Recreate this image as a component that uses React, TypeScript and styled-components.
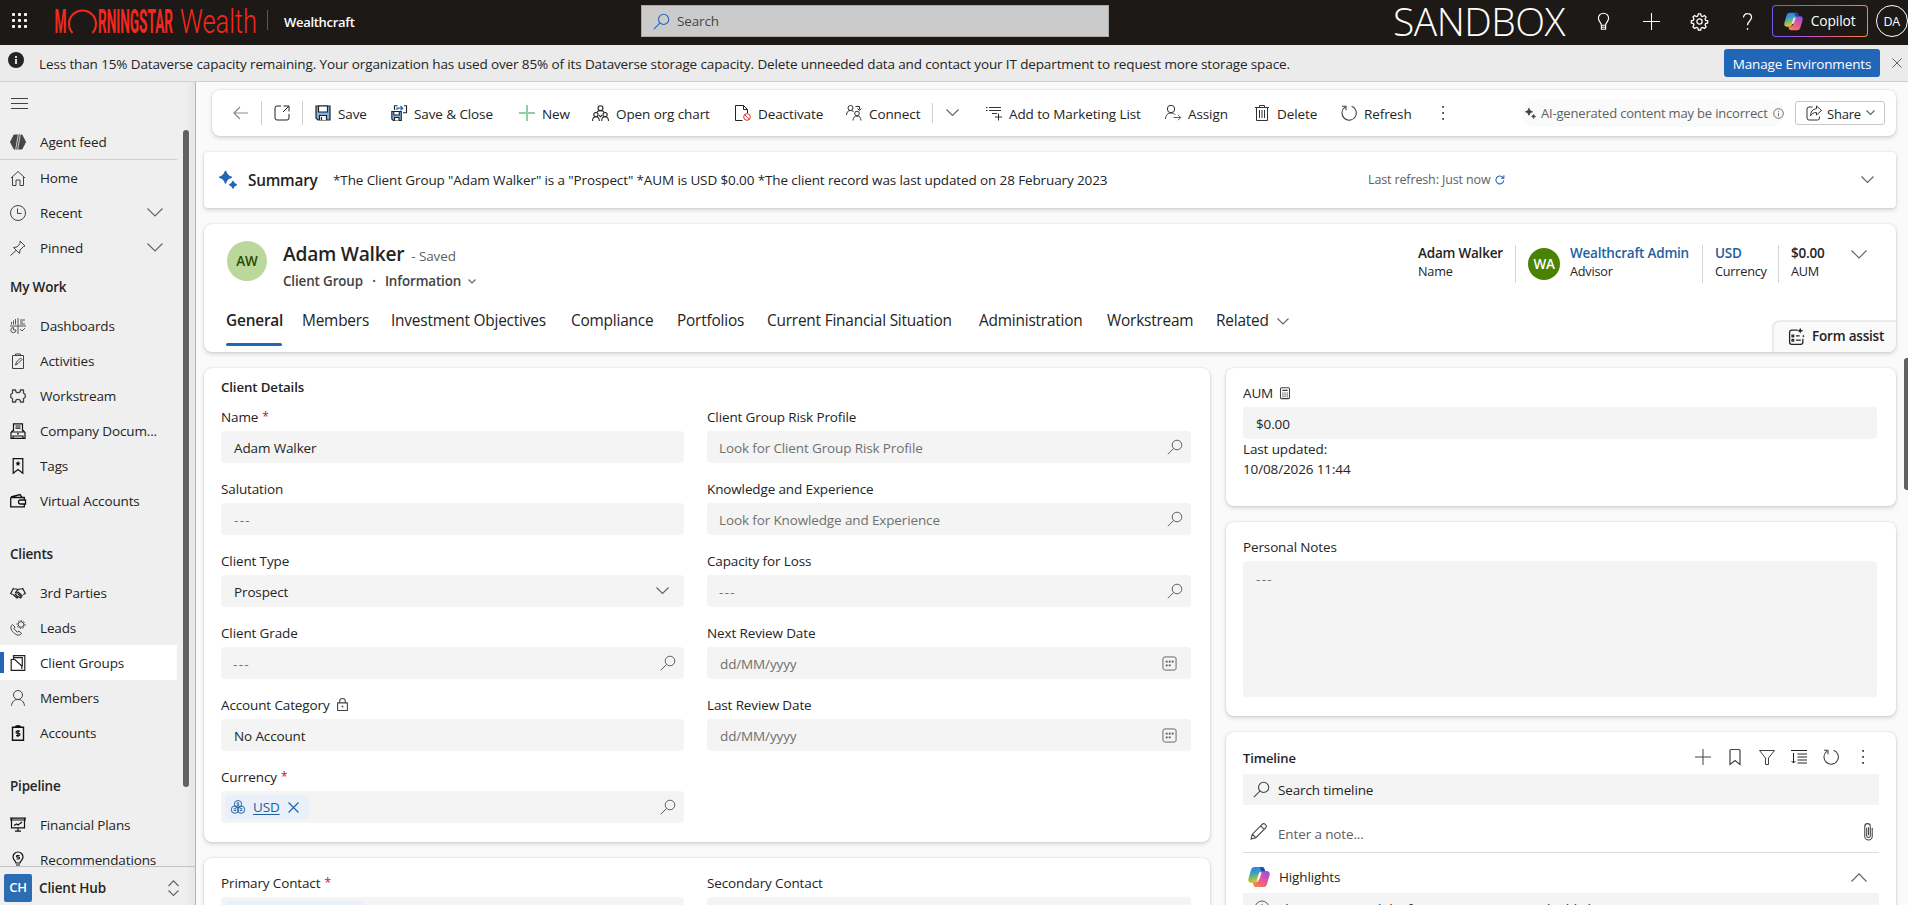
import React from "react";
import styled, { createGlobalStyle, css } from "styled-components";

const GlobalStyle = createGlobalStyle`
  * { box-sizing: border-box; }
  html, body { margin: 0; padding: 0; overflow: hidden; }
  body {
    font-family: "Open Sans", "Noto Sans", sans-serif;
    font-size: 13.5px;
    line-height: 20px;
    letter-spacing: -0.13px;
    color: #242424;
    background: #fafafa;
  }
  svg { display: block; flex: none; overflow: visible; }
`;

/* ---------- icons ---------- */

type IconProps = {
  size?: number;
  color?: string;
  sw?: number;
  box?: string;
  children?: React.ReactNode;
};
const Icon = ({ size = 16, color = "#424242", sw = 1, box = "0 0 16 16", children }: IconProps) => (
  <svg width={size} height={size} viewBox={box} fill="none" stroke={color} strokeWidth={sw}>
    {children}
  </svg>
);
type P = { size?: number; color?: string };

const Chevron = ({ w = 14, color = "#616161", up = false, sw = 1.1 }: { w?: number; color?: string; up?: boolean; sw?: number }) => (
  <svg width={w} height={w / 2 + 1} viewBox={`0 0 ${w} ${w / 2 + 1}`} fill="none" stroke={color} strokeWidth={sw}>
    <path d={up ? `M.5 ${w / 2 + 0.5}L${w / 2} .8l${w / 2 - 0.5} ${w / 2 - 0.3}` : `M.5 .5l${w / 2 - 0.5} ${w / 2 - 0.5}l${w / 2 - 0.5} -${w / 2 - 0.5}`} />
  </svg>
);
const SearchIcon = ({ size = 16, color = "#616161" }: P) => (
  <Icon size={size} color={color}><circle cx="10" cy="6" r="4.8" /><path d="M6.5 9.5L.8 15.2" /></Icon>
);
const PlusIcon = ({ size = 16, color = "#424242", sw = 1 }: P & { sw?: number }) => (
  <Icon size={size} color={color} sw={sw}><path d="M8 0v16M0 8h16" /></Icon>
);
const RefreshIcon = ({ size = 16, color = "#424242" }: P) => (
  <Icon size={size} color={color} sw={1.1}><path d="M10.6 1.2A7.2 7.2 0 1 1 4 2.1M1 1.3h4v4" /></Icon>
);
const ReloadIcon = () => (
  <Icon size={10} color="#2266b8" sw={1.700}><path d="M14 8.500A6.300 6.300 0 1 1 12.500 3.800L14 5M14.200 .5V5.200H9.500" /></Icon>
);
const DotsIcon = () => (
  <Icon><g fill="#424242" stroke="none"><rect x="7.2" y="1" width="1.8" height="1.8" /><rect x="7.2" y="7" width="1.8" height="1.8" /><rect x="7.2" y="13" width="1.8" height="1.8" /></g></Icon>
);
const CloseIcon = ({ size = 11, color = "#616161" }: P) => (
  <Icon size={size} color={color} box="0 0 11 11" sw={1.1}><path d="M.5 .5l10 10M10.5 .5l-10 10" /></Icon>
);
const CopilotIcon = ({ size = 20 }: P) => (
  <svg width={size} height={size} viewBox="0 0 20 20">
    <defs>
      <linearGradient id="cpA" x1="0" y1="0" x2="0.2" y2="1">
        <stop offset="0" stopColor="#2f7be0" /><stop offset=".45" stopColor="#3fa0c8" /><stop offset=".75" stopColor="#8fbf4d" /><stop offset="1" stopColor="#e6c33f" />
      </linearGradient>
      <linearGradient id="cpB" x1="1" y1="0" x2="0.2" y2="1">
        <stop offset="0" stopColor="#8a4fe0" /><stop offset=".5" stopColor="#e2559f" /><stop offset="1" stopColor="#fb8148" />
      </linearGradient>
    </defs>
    <path d="M6 .8h6.600c1.200 0 2 .7 2.300 1.800l.7 2.400h-2.300c-1.500 0-2.600.8-3 2.200L8.400 13.500c-.4 1.300-1.200 1.900-2.500 1.900H3.200C1 15.400-.2 13.700.4 11.500L2.700 3.600C3.200 1.800 4.300.8 6 .8z" fill="url(#cpA)" />
    <path d="M14 19.200H7.400c-1.200 0-2-.7-2.300-1.800l-.7-2.400h2.300c1.500 0 2.600-.8 3-2.200l1.900-6.300c.4-1.300 1.200-1.900 2.500-1.900h2.700c2.200 0 3.400 1.700 2.800 3.900l-2.300 7.900c-.5 1.800-1.600 2.800-3.300 2.800z" fill="url(#cpB)" />
    <path d="M10.800 .8h1.800c1.200 0 2 .7 2.300 1.800l.7 2.400h-3.400z" fill="#1c46b8" />
    <path d="M8.300 11.500l1.800-5.700 2.300-.2-1.900 6.300-2.600 1.300z" fill="#fff" opacity=".85" />
  </svg>
);
const Sparkle = ({ size = 18, color = "#2266b8" }: P) => (
  <svg width={size} height={size} viewBox="0 0 18 18" fill={color}>
    <path d="M6.500 .500c.8 3.300 2.400 4.900 5.700 5.700-3.300.8-4.900 2.400-5.700 5.700C5.700 8.600 4.100 7 .8 6.200 4.100 5.400 5.700 3.800 6.500.500z" stroke={color} strokeWidth="1.600" strokeLinejoin="round" />
    <path d="M14 10.500c.5 2 1.300 2.800 3.300 3.300-2 .5-2.800 1.300-3.300 3.300-.5-2-1.300-2.800-3.300-3.300 2-.5 2.800-1.300 3.300-3.300z" stroke={color} strokeWidth="1.400" strokeLinejoin="round" />
  </svg>
);

const sideIcons: Record<string, React.ReactNode> = {
  feed: (
    <Icon><path d="M4 1h8l3.500 7L12 15H4L.5 8z" fill="#484644" stroke="#484644" strokeLinejoin="round" /><path d="M8.300 .5L5.700 15.500M10.300 .5L7.700 15.500" stroke="#efefef" strokeWidth=".8" /></Icon>
  ),
  home: <Icon><path d="M1 8L8 1.500 15 8M2.500 7v8.500h3.500V10h4v5.500h3.500V7" /></Icon>,
  recent: <Icon><circle cx="8" cy="8" r="7.500" /><path d="M7.500 3.500V8.500h4" /></Icon>,
  pin: <Icon><path d="M10 1l5 5-1.500.5-3.500 3.500-.5 3.500L3.500 7.500 7 7l3-3.500zM6 10.500L.5 15.500" /></Icon>,
  dash: (
    <Icon color="#555"><path d="M0 8h16M8 0v16M10 2h5M10 4h3M10 6h5M1.500 6.500V4M3.500 6.500V2.500M5.500 6.500V1M10 11l2 2 3-3M3.500 9.500V12h2.500" /><path d="M6 12a2.600 2.600 0 1 1-2.500-2.500" /></Icon>
  ),
  act: <Icon><path d="M2.500 2.500h11v13h-11zM5.500 2.500V1h5v1.500M5.500 12l1-3 4-4 1.500 1.500-4 4z" /></Icon>,
  puzzle: (
    <Icon sw={1.300}><path d="M2.500 2h3.200c-.3 1.800.5 2.600 2.300 2.600s2.600-.8 2.300-2.600h3.200v3.300l1.700 1v3.200l-1.700 1V14h-3.200c.3-1.800-.5-2.600-2.300-2.600s-2.600.8-2.300 2.600H2.500v-3.500l-1.700-1V6.300l1.700-1z" strokeLinejoin="round" /></Icon>
  ),
  docs: (
    <Icon color="#111" sw={1.2}><path d="M3.500 8V.8h9V8M5.500 3h5M5.500 5.200h5M3.500 7L1 9.500v5.800h14V9.500L12.500 7M1 9h14M3 15v-2h10v2" /><rect x="7" y="10.200" width="2" height="1.200" fill="#111" stroke="none" /></Icon>
  ),
  tag: (
    <Icon color="#111" sw={1.2}><path d="M3.200.7h9.600v14.500L8 11.500l-4.800 3.700z" /><path d="M8 3l.8 1.600 1.700.2-1.300 1.200.4 1.800L8 7l-1.600.8.400-1.800-1.300-1.200 1.700-.2z" fill="#111" stroke="none" /></Icon>
  ),
  wallet: (
    <Icon color="#111" sw={1.3}><path d="M.7 4.500v9.300h13.600V11M.7 4.500h13.600V7M1 4l9-2.500 2 2.800M10.500 7h5v4h-5a2 2 0 0 1 0-4z" /></Icon>
  ),
  shake: (
    <Icon color="#222" sw={1.2}><path d="M3.500 3L.7 8.500l2 1M12.500 3l2.800 5.500-2 1M3.500 4h3L8 4.700 9.500 4h3M8 4.700L5.500 7.500c1 1 2 .6 2.800-.3L12.500 11M3 9.500L7 13l1-.6M5 9l3 3M8 9l3.500 3-1 1L8 11.500" /></Icon>
  ),
  leads: (
    <Icon><path d="M2.500 4.500C0 6.500.5 9.500 3.500 12.500s6 3.500 8 1l-2.500-2.300-1.700 1L4 8.700l1-1.700z" /><circle cx="11" cy="4.500" r="2.800" /><circle cx="11" cy="4.500" r="4" strokeDasharray="1.500 1.500" /></Icon>
  ),
  groups: (
    <Icon color="#222" sw={1.2}><path d="M3.500 4.300V.7h11.300v14.600H1.200V4.500h3.600l7 6.500v3M4 2.700h8.300v9" /></Icon>
  ),
  person: <Icon><circle cx="8" cy="5" r="4.500" /><path d="M1.500 15.800c.5-4.300 3-6.300 6.500-6.300s6 2 6.500 6.300" /></Icon>,
  accounts: (
    <Icon color="#111" sw={1.2}><path d="M2.500 2.200h11v13h-11zM5 2.200C5.500 1 6 .7 8 .7s2.500.3 3 1.500" strokeWidth="1.400" /><path d="M10 6.200H7.200c-1.500 0-1.500 2.200 0 2.200h1.600c1.500 0 1.500 2.300 0 2.300H6M8 5v7" /></Icon>
  ),
  plans: (
    <Icon color="#111" sw={1.2}><path d="M0 1.200h16M0 3h16M1.500 1.500v9.300h13V1.500M8 11v3M5 14.200h6M4 8.500l2.500-1.500L8 8l4-3" /></Icon>
  ),
  bulb: (
    <Icon color="#111" sw={1.200}><path d="M6 11c0-2-3-3-3-6a5 5 0 0 1 10 0c0 3-3 4-3 6zM6 13h4M6 15h4" /><path d="M9.500 3.500H7.400c-1.200 0-1.200 1.700 0 1.700h1.200c1.200 0 1.200 1.800 0 1.800H6.500" /></Icon>
  ),
};

/* ---------- top bar ---------- */

const Page = styled.div`
  width: 100%;
  height: 905px;
  display: flex;
  flex-direction: column;
  overflow: hidden;
`;
const TopBar = styled.header`
  height: 45px;
  flex: none;
  display: flex;
  align-items: flex-start;
  background: #1d1916;
  color: #fff;
`;
const Waffle = styled.div`
  display: grid;
  grid-template-columns: repeat(3, 3px);
  gap: 3px;
  margin: 13px 0 0 12px;
  i { width: 3px; height: 3px; border-radius: 1px; background: #fff; }
`;
const Logo = styled.svg`
  margin: 0 9px 0 28px;
  letter-spacing: 0;
`;
const TopDivider = styled.div`
  width: 1px;
  height: 20px;
  margin-top: 10px;
  background: #5a5754;
`;
const AppName = styled.div`
  width: 357px;
  margin: 12px 0 0 16px;
  font-weight: 600;
  font-size: 13px;
  letter-spacing: -0.3px;
`;
const SearchBox = styled.div`
  width: 468px;
  height: 32px;
  margin-top: 5px;
  padding-left: 11px;
  display: flex;
  align-items: center;
  gap: 7px;
  background: #cbcbcb;
  border: 1px solid #a8a8a8;
  color: #484644;
`;
const SandboxLabel = styled.div`
  width: 171px;
  margin-left: 284px;
  font-size: 39px;
  line-height: 42px;
  font-weight: 300;
  letter-spacing: -0.5px;
  white-space: nowrap;
`;
const TopIcons = styled.div`
  display: grid;
  grid-template-columns: repeat(4, 48.200px);
  justify-items: center;
  align-items: center;
  height: 42px;
  margin-left: 15px;
`;
const CopilotButton = styled.div`
  width: 96px;
  height: 32px;
  margin: 5px 0 0 0;
  display: flex;
  align-items: center;
  gap: 8px;
  padding-left: 11px;
  border: 1px solid transparent;
  border-radius: 4px;
  font-size: 13.800px;
  background: linear-gradient(#1d1916, #1d1916) padding-box,
    linear-gradient(100deg, #6a5cf0, #b455d0 40%, #e8548c 65%, #f0943c) border-box;
`;
const UserCircle = styled.div`
  width: 32px;
  height: 32px;
  margin: 5px 0 0 8px;
  border: 1px solid #fff;
  border-radius: 50%;
  display: grid;
  place-items: center;
  padding-top: 2px;
  font-size: 12.500px;
`;

/* ---------- notification ---------- */

const Notice = styled.div`
  height: 37px;
  flex: none;
  display: flex;
  align-items: center;
  background: #ebebeb;
  border-bottom: 1px solid #cfcfcf;
`;
const NoticeText = styled.div`
  flex: 1;
  padding: 2px 0 0 15px;
  letter-spacing: -0.125px;
  white-space: nowrap;
`;
const InfoDot = styled.div`
  width: 16px;
  height: 16px;
  margin: -6px 0 0 8px;
  border-radius: 50%;
  background: #242424;
  display: flex;
  flex-direction: column;
  align-items: center;
  gap: 1px;
  padding-top: 4px;
  &::before { content: ""; width: 2px; height: 2px; background: #ddd; }
  &::after { content: ""; width: 2px; height: 5px; background: #ddd; }
`;
const BlueButton = styled.div`
  width: 156px;
  height: 28px;
  border-radius: 3px;
  background: #2266b8;
  color: #fff;
  letter-spacing: -0.15px;
  text-align: center;
  line-height: 30px;
  margin-right: 12px;
`;
const NoticeClose = styled.div`
  margin-right: 6px;
`;

/* ---------- sidebar ---------- */

const Body = styled.div`
  flex: 1;
  min-height: 0;
  display: flex;
`;
const Sidebar = styled.nav`
  width: 196px;
  flex: none;
  display: flex;
  flex-direction: column;
  letter-spacing: -0.14px;
  background: linear-gradient(90deg, #efefef 178px, #efefef 185px, #e6e6e6 195px);
  border-right: 1px solid #b5b5b5;
`;
const MenuToggle = styled.div`
  height: 42px;
  flex: none;
  padding: 16px 0 0 11px;
  display: flex;
  flex-direction: column;
  gap: 4px;
  i { width: 17px; height: 1px; background: #424242; }
`;
const SideScroll = styled.div`
  flex: 1;
  min-height: 0;
  overflow: hidden;
  display: flex;
`;
const SideList = styled.div`
  width: 177px;
`;
const SideThumb = styled.div`
  width: 6px;
  height: 657px;
  margin: 6px 0 0 6px;
  border-radius: 3px;
  background: #616161;
`;
const SideRow = styled.div<{ $active?: boolean; $line?: boolean }>`
  height: ${(p) => (p.$line ? 36 : 35)}px;
  display: flex;
  align-items: center;
  padding: 0 14px 0 ${(p) => (p.$active ? 0 : 10)}px;
  background: ${(p) => (p.$active ? "#fff" : "transparent")};
  border-bottom: ${(p) => (p.$line ? "1px solid #cfcfcf" : "0")};
  &::before {
    content: "";
    display: ${(p) => (p.$active ? "block" : "none")};
    width: 4px;
    height: 21px;
    margin-right: 6px;
    background: #2266b8;
  }
`;
const SideLabel = styled.span`
  flex: 1;
  margin-left: 14px;
  padding-top: 1px;
  white-space: nowrap;
`;
const GroupLabel = styled.div<{ $gap?: boolean }>`
  height: ${(p) => (p.$gap ? 57 : 43)}px;
  padding: ${(p) => (p.$gap ? 26 : 12)}px 0 0 10px;
  font-weight: 600;
  letter-spacing: -0.2px;
`;
const AreaSwitch = styled.div`
  height: 39px;
  flex: none;
  display: flex;
  align-items: center;
  padding: 4px 16px 0 4px;
  border-top: 1px solid #c4c4c4;
  font-weight: 600;
  span { flex: 1; margin-left: 7px; }
`;
const AreaBadge = styled.div`
  width: 28px;
  height: 28px;
  border-radius: 2px;
  background: #2b6cb3;
  color: #fff;
  font-size: 13px;
  text-align: center;
  line-height: 26px;
`;
const UpDown = styled.div`
  display: flex;
  flex-direction: column;
  gap: 4px;
`;

/* ---------- main ---------- */

const Main = styled.main`
  flex: 1;
  min-width: 0;
  display: flex;
  justify-content: space-between;
  background: #fafafa;
`;
const Content = styled.div`
  width: 1692px;
  margin-left: 8px;
  padding-top: 8px;
`;
const PageThumb = styled.div`
  width: 4px;
  height: 132px;
  margin-top: 276px;
  border-radius: 3px 0 0 3px;
  background: #616161;
`;
const card = css`
  background: #fff;
  border-radius: 8px;
  box-shadow: 0 0 2px rgba(0, 0, 0, 0.14), 0 2px 4px rgba(0, 0, 0, 0.15);
`;
const CommandBar = styled.div`
  ${card}
  height: 46px;
  margin-left: 8px;
  padding: 0 11px 0 21px;
  display: flex;
  align-items: center;
`;
const Command = styled.div<{ $w: number }>`
  width: ${(p) => p.$w}px;
  flex: none;
  display: flex;
  align-items: center;
  gap: 7px;
  white-space: nowrap;
  letter-spacing: -0.1px;
  span { padding-top: 2px; }
`;
const Bar = styled.div<{ $h: number; $mr?: number }>`
  width: 1px;
  height: ${(p) => p.$h}px;
  margin-right: ${(p) => p.$mr || 0}px;
  background: #cfcfcf;
`;
const AiPill = styled.div`
  width: 262px;
  height: 28px;
  margin-left: auto;
  border-radius: 14px;
  background: #fafafa;
  color: #616161;
  display: flex;
  align-items: center;
  gap: 5px;
  padding-left: 3px;
  font-size: 13px;
  letter-spacing: -0.18px;
  white-space: nowrap;
`;
const ShareButton = styled.div`
  width: 90px;
  height: 24px;
  margin-left: 11px;
  border: 1px solid #c7c7c7;
  border-radius: 3px;
  display: flex;
  align-items: center;
  gap: 5px;
  padding-left: 10px;
  font-size: 13px;
  letter-spacing: -0.2px;
  span { padding-top: 1px; }
`;
const SummaryCard = styled.section`
  ${card}
  height: 56px;
  margin-top: 16px;
  border-radius: 4px;
  padding: 0 22px 0 15px;
  display: flex;
  align-items: center;
  white-space: nowrap;
`;
const SummaryTitle = styled.div`
  width: 85px;
  margin-left: 11px;
  font-size: 15.300px;
  font-weight: 600;
  letter-spacing: -0.2px;
`;
const SummaryText = styled.div`
  width: 1035px;
  letter-spacing: -0.12px;
`;
const Refreshed = styled.div`
  flex: 1;
  display: flex;
  align-items: center;
  gap: 5px;
  font-size: 12.500px;
  color: #616161;
`;
const HeadCard = styled.section`
  ${card}
  height: 128px;
  margin-top: 16px;
  display: flex;
  flex-direction: column;
  justify-content: space-between;
`;
const HeadTop = styled.div`
  display: flex;
  align-items: flex-start;
  padding: 17px 29px 0 23px;
`;
const Avatar = styled.div<{ $d: number; $bg: string; $fg: string }>`
  width: ${(p) => p.$d}px;
  height: ${(p) => p.$d}px;
  border-radius: 50%;
  background: ${(p) => p.$bg};
  color: ${(p) => p.$fg};
  font-weight: 600;
  display: grid;
  place-items: center;
`;
const NameBlock = styled.div`
  flex: 1;
  margin-left: 16px;
`;
const NameLine = styled.div`
  display: flex;
  align-items: baseline;
  height: 29px;
  line-height: 26px;
  font-size: 19.200px;
  font-weight: 600;
  letter-spacing: -0.25px;
  gap: 7px;
  small { font-size: 13.500px; font-weight: 400; color: #616161; letter-spacing: -0.1px; }
`;
const FormLine = styled.div`
  display: flex;
  align-items: center;
  font-weight: 600;
  font-size: 13.400px;
  color: #424242;
  height: 22px;
`;
const FormDot = styled.span`
  width: 22px;
  text-align: center;
`;
const FormName = styled.span`
  margin-right: 7px;
  padding-bottom: 1px;
`;
const HeadFact = styled.div<{ $w: number; $line?: boolean; $blue?: boolean }>`
  width: ${(p) => p.$w}px;
  height: 38px;
  margin-top: 4px;
  display: flex;
  gap: 10px;
  padding-left: 12px;
  border-left: ${(p) => (p.$line ? "1px solid #d6d6d6" : "0")};
  font-size: 12.700px;
  line-height: 19px;
  letter-spacing: -0.22px;
  white-space: nowrap;
  strong { display: block; font-size: 13.500px; font-weight: 600; color: ${(p) => (p.$blue ? "#225f9f" : "#242424")}; line-height: 17px; }
  ${Avatar} { align-self: center; font-size: 13.500px; }
`;
const HeadChevron = styled.div`
  margin-top: 9px;
`;
const HeadBottom = styled.div`
  height: 47px;
  display: flex;
  justify-content: space-between;
  align-items: flex-end;
`;
const Tabs = styled.div`
  display: flex;
  align-self: flex-start;
  margin-left: 22px;
  font-size: 15.400px;
  letter-spacing: -0.2px;
`;
const Tab = styled.div<{ $w: number; $active?: boolean }>`
  width: ${(p) => p.$w}px;
  height: 41px;
  padding-top: 6px;
  white-space: nowrap;
  font-weight: ${(p) => (p.$active ? 600 : 400)};
  display: flex;
  flex-direction: column;
  justify-content: space-between;
  &::after {
    content: "";
    width: 56px;
    height: 3px;
    border-radius: 2px;
    background: ${(p) => (p.$active ? "#2266b8" : "transparent")};
  }
  div { display: flex; align-items: center; gap: 8px; }
`;
const FormAssist = styled.div`
  width: 124px;
  height: 32px;
  border: 2px solid #ebebeb;
  border-width: 2px 0 0 2px;
  border-radius: 8px 0 8px 0;
  background: #fafafa;
  display: flex;
  align-items: center;
  gap: 7px;
  padding: 0 0 2px 14px;
  font-weight: 600;
  white-space: nowrap;
  letter-spacing: -0.2px;
`;
const Columns = styled.div`
  display: flex;
  gap: 16px;
  margin-top: 16px;
`;
const Column = styled.div<{ $w: number }>`
  width: ${(p) => p.$w}px;
  display: flex;
  flex-direction: column;
  gap: 16px;
`;
const Card = styled.section<{ $h: number; $pt?: number; $pr?: number }>`
  ${card}
  height: ${(p) => p.$h}px;
  padding: ${(p) => p.$pt ?? 9}px ${(p) => p.$pr ?? 17}px 0 17px;
`;
const CardTitle = styled.div`
  font-weight: 600;
  font-size: 13.300px;
  height: 29px;
`;
const FieldGrid = styled.div<{ $rows: number }>`
  display: grid;
  grid-template-columns: 463px 484px;
  column-gap: 23px;
  grid-template-rows: repeat(${(p) => p.$rows}, 72px);
  grid-auto-flow: column;
`;
const Label = styled.div`
  height: 25px;
  display: flex;
  align-items: center;
  gap: 6px;
  padding-bottom: 4px;
  em { color: #c50f1f; font-style: normal; font-size: 12px; margin-left: -2px; }
`;
const Input = styled.div<{ $muted?: boolean; $pl?: number; $h?: number }>`
  height: ${(p) => p.$h || 32}px;
  border-radius: 4px;
  background: #f4f4f4;
  color: ${(p) => (p.$muted ? "#707070" : "#242424")};
  display: flex;
  align-items: ${(p) => (p.$h ? "flex-start" : "center")};
  justify-content: space-between;
  padding: ${(p) => (p.$h ? 6 : 0)}px 8px 0 ${(p) => p.$pl ?? 13}px;
`;
const Value = styled.span`
  padding-top: 1px;
`;
const Dashes = styled.span`
  padding-top: 2px;
  letter-spacing: 1.3px;
`;
const EndSlot = styled.div<{ $r: number }>`
  margin-right: ${(p) => p.$r}px;
`;
const Chip = styled.div<{ $w: number }>`
  width: ${(p) => p.$w}px;
  height: 24px;
  border-radius: 4px;
  background: #e9f0fa;
  display: flex;
  align-items: center;
  gap: 8px;
  padding-left: 6px;
  color: #225f9f;
  u { text-underline-offset: 2px; }
`;
const TimelineHead = styled.div`
  height: 33px;
  display: flex;
  align-items: center;
  justify-content: space-between;
  font-weight: 600;
  font-size: 13px;
  padding: 0 8px 0 0;
`;
const TimelineTools = styled.div`
  display: flex;
  gap: 16px;
  padding-bottom: 1px;
`;
const TimelineSearch = styled.div`
  height: 31px;
  width: 636px;
  display: flex;
  align-items: center;
  gap: 8px;
  padding-left: 10px;
  background: #f4f4f4;
`;
const NoteRow = styled.div`
  height: 48px;
  width: 636px;
  display: flex;
  align-items: center;
  padding: 6px 2px 0 7px;
  border-bottom: 1px solid #dcdcdc;
  color: #616161;
  span { flex: 1; margin-left: 11px; padding-top: 5px; }
`;
const HighlightsRow = styled.div`
  height: 40px;
  width: 636px;
  display: flex;
  align-items: center;
  padding: 8px 12px 0 5px;
  span { flex: 1; margin-left: 9px; }
`;
const HighlightBox = styled.div`
  height: 40px;
  width: 636px;
  background: #f4f4f4;
  display: flex;
  align-items: flex-start;
  gap: 8px;
  padding: 7px 0 0 11px;
  span { margin-top: -1px; }
`;

/* ---------- command icons ---------- */

const SaveIcon = () => (
  <Icon color="#222" sw={1.2}><path d="M1 1h14v14H3l-2-2z" fill="#7db4e6" /><path d="M3.500 1h9v6h-9z" fill="#fff" /><path d="M4.500 15v-4.500h7V15" fill="#fff" /><path d="M6.500 12v3" /></Icon>
);
const SaveCloseIcon = () => (
  <Icon color="#222" sw={1.1}><path d="M.8 6.500h9.500v9H2.300L.8 14z" fill="#7db4e6" /><path d="M2.800 6.500h5.500v3.500H2.800z" fill="#fff" /><path d="M3.500 15.500v-3h4.500v3" fill="#fff" /><path d="M3.500 5V.8h3M13 .8h2.500v7H12" /><path d="M6 5V3.200h5.500M9.500 1l2.300 2.200-2.300 2.200" stroke="#2266b8" strokeWidth="1.200" /></Icon>
);
const OrgIcon = () => (
  <Icon color="#222" size={17}><circle cx="8" cy="3" r="2.300" /><circle cx="3.700" cy="9" r="2" /><circle cx="12.300" cy="9" r="2" /><path d="M4.500 7C5 5.800 6 5.300 8 5.300s3 .5 3.500 1.700M.5 15c0-3 1.300-4 3.200-4s3.200 1 3.200 4M9.100 15c0-3 1.300-4 3.200-4s3.200 1 3.200 4M6.500 9.500L8 11l1.500-1.500" /></Icon>
);
const DeactivateIcon = () => (
  <Icon color="#222"><path d="M7.500 15.500h-7V.5h8l4 4v3.500M8.500.5v4h4" /><circle cx="12" cy="12" r="3.300" stroke="#d13438" /><path d="M9.700 9.700l4.600 4.600" stroke="#d13438" /></Icon>
);
const ConnectIcon = () => (
  <Icon color="#333"><circle cx="4.500" cy="3" r="2.500" /><path d="M.5 10c.2-3 1.500-4.500 4-4.500 1.500 0 2.500.5 3.200 1.500M9.500 1.500h4v3M11.500 3.500l2 2 2-2" /><circle cx="11" cy="8.500" r="2.300" /><path d="M7 15.500c.2-3 1.500-4.500 4-4.500s3.800 1.500 4 4.500" /></Icon>
);
const ListIcon = () => (
  <Icon color="#333"><path d="M3 2.500h12M3 5.500h12M0 2.500h1.500M0 5.500h1.500M6 8.500h5M12.500 8.500v7M9 12h7" /></Icon>
);
const AssignIcon = () => (
  <Icon color="#333"><circle cx="6" cy="4" r="3.700" /><path d="M.5 14c.3-4 2.200-6 5.500-6 2 0 3.300.6 4.200 1.800" /><path d="M8.500 12.500h7M13 9.800l2.700 2.700L13 15.200" stroke="#2266b8" /></Icon>
);
const TrashIcon = () => (
  <Icon color="#333"><path d="M1 2.500h14M5.500 2.500v-2h5v2M2.500 2.500v13h11v-13M5.500 5v8M8 5v8M10.500 5v8" /></Icon>
);
const PopoutIcon = () => (
  <Icon color="#222"><path d="M7 1H3a2 2 0 0 0-2 2v10a2 2 0 0 0 2 2h10a2 2 0 0 0 2-2V9M9.500 1H15v5.500M15 1L9 7" /></Icon>
);
const BackIcon = () => <Icon color="#8a8a8a" sw={1.200}><path d="M7 2L1 8l6 6M1 8H15" /></Icon>;
const ShareIcon = () => (
  <Icon color="#333"><path d="M6.500 2H3a2 2 0 0 0-2 2v9a2 2 0 0 0 2 2h8.500a2 2 0 0 0 2-2v-1.500M10.500 1l5 4.500-5 4.500V7.500C7.500 7.500 6 8.500 4.500 11c0-4 2-7 6-7.300z" strokeLinejoin="round" /></Icon>
);
const InfoIcon = ({ size = 11 }: P) => (
  <Icon size={size} color="#616161" sw={size < 14 ? 1.3 : 1}><circle cx="8" cy="8" r="7" /><path d="M8 7v5M8 4v1.500" /></Icon>
);
const CalendarIcon = () => (
  <Icon size={15} color="#616161"><rect x="1" y="1" width="14" height="14" rx="2" /><g fill="#616161" stroke="none"><rect x="4" y="5" width="2" height="2" /><rect x="7.200" y="5" width="2" height="2" /><rect x="10.400" y="5" width="2" height="2" /><rect x="4" y="9" width="2" height="2" /><rect x="7.200" y="9" width="2" height="2" /></g></Icon>
);
const LockIcon = () => (
  <Icon size={13}><path d="M2 6h12v9.500H2zM4.500 6V4a3.500 3.500 0 0 1 7 0v2" strokeWidth="1.300" /><rect x="7" y="9.500" width="2" height="2" fill="#424242" stroke="none" /></Icon>
);
const CalcIcon = () => (
  <Icon size={12} sw={1.4}><rect x="2" y="1" width="12" height="14.500" rx="1.500" /><path d="M4.500 4.500h7M4.500 8h1.500M7.300 8h1.500M10.200 8h1.500M4.500 10.500h1.500M7.300 10.500h1.500M10.200 10.500h1.500M4.500 13h1.500M7.300 13h1.500M10.200 13h1.500" /></Icon>
);
const CoinsIcon = () => (
  <Icon size={14} color="#225f9f" sw={1.100}><circle cx="8" cy="4.800" r="4.200" /><circle cx="4.500" cy="11" r="4.200" /><circle cx="11.500" cy="11" r="4.200" /><path d="M9.300 3.300H7.500c-1 0-1 1.500 0 1.500h1c1 0 1 1.500 0 1.500H6.700M3 10h3M3 12h3M10 10h3M10 12h3" /></Icon>
);
const FormAssistIcon = () => (
  <Icon size={17} color="#242424" sw={1.200}><path d="M9 2H3.500a2 2 0 0 0-2 2v9.500a2 2 0 0 0 2 2H12a2 2 0 0 0 2-2V10M7.500 7.500h3.500M7.500 11.500h4.500" /><rect x="3.800" y="6.700" width="1.500" height="1.500" /><rect x="3.800" y="10.800" width="1.500" height="1.500" /><path d="M11.500-.5c.4 2 1 2.600 3 3-2 .4-2.600 1-3 3-.4-2-1-2.600-3-3 2-.4 2.600-1 3-3zM14.500 6c.2 1 .6 1.300 1.600 1.500-1 .2-1.400.6-1.600 1.500-.2-1-.6-1.300-1.600-1.500 1-.2 1.400-.5 1.600-1.500z" fill="#242424" stroke="none" /></Icon>
);
const GearIcon = () => (
  <Icon size={17} color="#fff" sw={1.2}><circle cx="8" cy="8" r="2.500" /><path d="M6.900.8h2.200l.5 2 1.300.5 1.800-1 1.500 1.500-1 1.800.5 1.300 2 .5v2l-2 .5-.5 1.300 1 1.800-1.500 1.500-1.800-1-1.300.5-.5 2H6.900l-.5-2-1.300-.5-1.800 1-1.500-1.500 1-1.800-.5-1.300-2-.5v-2l2-.5.5-1.300-1-1.800 1.500-1.500 1.800 1 1.300-.5z" /></Icon>
);
const LightIcon = () => (
  <Icon size={17} color="#fff" sw={1.1}><path d="M6 11.500c0-2.500-2.800-3.500-2.800-6.500a4.800 4.800 0 0 1 9.600 0c0 3-2.800 4-2.800 6.500zM6 11.500v3.800h4v-3.800M6 13.400h4" /></Icon>
);
const HelpIcon = () => (
  <Icon size={17} color="#fff" sw={1.2}><path d="M4.200 4.200A3.700 3.700 0 0 1 8 .6c2.200 0 3.800 1.400 3.800 3.500C11.800 7.500 8 7.500 8 11.500M8 14v1.700" /></Icon>
);
const PencilIcon = () => (
  <Icon size={17}><path d="M1 15l1.200-4.500L11.500 1.200c.8-.8 2-.8 2.700 0l.6.600c.8.8.8 1.900 0 2.700L5.500 13.800zM10 2.700l3.300 3.300M2.200 10.500l3.300 3.300" /></Icon>
);
const ClipIcon = () => (
  <Icon size={17}><path d="M6.300 4.500v7.500a1.700 1.700 0 0 0 3.400 0V3.500M11.500 4.500v8a3.500 3.500 0 0 1-7 0V3.200a2.600 2.600 0 0 1 5.200 0M8 4v7.500" /></Icon>
);

const sideItems: { label: string; icon?: string; kind?: string }[] = [
  { label: "Agent feed", icon: "feed", kind: "line" },
  { label: "Home", icon: "home" },
  { label: "Recent", icon: "recent", kind: "chev" },
  { label: "Pinned", icon: "pin", kind: "chev" },
  { label: "My Work", kind: "group" },
  { label: "Dashboards", icon: "dash" },
  { label: "Activities", icon: "act" },
  { label: "Workstream", icon: "puzzle" },
  { label: "Company Docum...", icon: "docs" },
  { label: "Tags", icon: "tag" },
  { label: "Virtual Accounts", icon: "wallet" },
  { label: "Clients", kind: "groupGap" },
  { label: "3rd Parties", icon: "shake" },
  { label: "Leads", icon: "leads" },
  { label: "Client Groups", icon: "groups", kind: "active" },
  { label: "Members", icon: "person" },
  { label: "Accounts", icon: "accounts" },
  { label: "Pipeline", kind: "groupGap" },
  { label: "Financial Plans", icon: "plans" },
  { label: "Recommendations", icon: "bulb" },
];

const tabs: [string, number][] = [
  ["General", 76],
  ["Members", 89],
  ["Investment Objectives", 180],
  ["Compliance", 106],
  ["Portfolios", 90],
  ["Current Financial Situation", 212],
  ["Administration", 128],
  ["Workstream", 109],
];

type FieldProps = {
  label: string;
  value?: string;
  required?: boolean;
  muted?: boolean;
  mark?: React.ReactNode;
  end?: React.ReactNode;
  pl?: number;
  children?: React.ReactNode;
};
const Field = ({ label, value, required, muted, mark, end, pl, children }: FieldProps) => (
  <div>
    <Label>{label} {required && <em>*</em>}{mark}</Label>
    <Input $muted={muted} $pl={pl}>
      {children}
      {value === "---" ? <Dashes>---</Dashes> : value && <Value>{value}</Value>}
      {end}
    </Input>
  </div>
);

export default function App() {
  const lookup = <SearchIcon />;
  const calendar = <EndSlot $r={6}><CalendarIcon /></EndSlot>;
  return (
    <Page>
      <GlobalStyle />
      <TopBar>
        <Waffle>{Array.from({ length: 9 }, (_, i) => <i key={i} />)}</Waffle>
        <Logo width="203" height="42" viewBox="55 0 203 42">
          <g fill="#f5281e" fontFamily="Roboto, sans-serif">
            <text x="54.500" y="33" fontSize="33.500" fontWeight="700" textLength="12" lengthAdjust="spacingAndGlyphs">M</text>
            <text x="98" y="33" fontSize="33.500" fontWeight="700" textLength="75" lengthAdjust="spacingAndGlyphs">RNINGSTAR</text>
            <text x="180" y="33" fontSize="33.500" fontWeight="300" textLength="77" lengthAdjust="spacingAndGlyphs">Wealth</text>
          </g>
          <path d="M72.500 33A13.500 13.500 0 1 1 92.500 33" fill="none" stroke="#f5281e" strokeWidth="2" />
        </Logo>
        <TopDivider />
        <AppName>Wealthcraft</AppName>
        <SearchBox><SearchIcon size={17} color="#2266b8" />Search</SearchBox>
        <SandboxLabel>SANDBOX</SandboxLabel>
        <TopIcons>
          <LightIcon />
          <PlusIcon size={17} color="#fff" />
          <GearIcon />
          <HelpIcon />
        </TopIcons>
        <CopilotButton><CopilotIcon size={19} />Copilot</CopilotButton>
        <UserCircle>DA</UserCircle>
      </TopBar>

      <Notice>
        <InfoDot />
        <NoticeText>
          Less than 15% Dataverse capacity remaining. Your organization has used over 85% of its Dataverse storage capacity. Delete unneeded data and contact your IT department to request more storage space.
        </NoticeText>
        <BlueButton>Manage Environments</BlueButton>
        <NoticeClose><CloseIcon size={10} /></NoticeClose>
      </Notice>

      <Body>
        <Sidebar>
          <MenuToggle><i /><i /><i /></MenuToggle>
          <SideScroll>
            <SideList>
              {sideItems.map((it) =>
                it.kind === "group" || it.kind === "groupGap" ? (
                  <GroupLabel key={it.label} $gap={it.kind === "groupGap"}>{it.label}</GroupLabel>
                ) : (
                  <SideRow key={it.label} $active={it.kind === "active"} $line={it.kind === "line"}>
                    {sideIcons[it.icon as string]}
                    <SideLabel>{it.label}</SideLabel>
                    {it.kind === "chev" && <Chevron w={16} />}
                  </SideRow>
                )
              )}
            </SideList>
            <SideThumb />
          </SideScroll>
          <AreaSwitch>
            <AreaBadge>CH</AreaBadge>
            <span>Client Hub</span>
            <UpDown><Chevron w={11} up /><Chevron w={11} /></UpDown>
          </AreaSwitch>
        </Sidebar>

        <Main>
          <Content>
            <CommandBar>
              <Command $w={28}><BackIcon /></Command>
              <Bar $h={24} $mr={12} />
              <Command $w={28}><PopoutIcon /></Command>
              <Bar $h={24} $mr={12} />
              <Command $w={76}><SaveIcon /><span>Save</span></Command>
              <Command $w={128}><SaveCloseIcon /><span>Save &amp; Close</span></Command>
              <Command $w={73}><PlusIcon color="#8fd0a0" sw={2} /><span>New</span></Command>
              <Command $w={143}><OrgIcon /><span>Open org chart</span></Command>
              <Command $w={111}><DeactivateIcon /><span>Deactivate</span></Command>
              <Command $w={86}><ConnectIcon /><span>Connect</span></Command>
              <Bar $h={20} $mr={13} />
              <Command $w={40}><Chevron w={13} /></Command>
              <Command $w={179}><ListIcon /><span>Add to Marketing List</span></Command>
              <Command $w={89}><AssignIcon /><span>Assign</span></Command>
              <Command $w={87}><TrashIcon /><span>Delete</span></Command>
              <Command $w={94}><RefreshIcon /><span>Refresh</span></Command>
              <DotsIcon />
              <AiPill>
                <Sparkle size={11} color="#424242" />
                AI-generated content may be incorrect
                <InfoIcon />
              </AiPill>
              <ShareButton><ShareIcon /><span>Share</span><Chevron w={9} /></ShareButton>
            </CommandBar>

            <SummaryCard>
              <Sparkle />
              <SummaryTitle>Summary</SummaryTitle>
              <SummaryText>*The Client Group "Adam Walker" is a "Prospect" *AUM is USD $0.00 *The client record was last updated on 28 February 2023</SummaryText>
              <Refreshed>Last refresh: Just now <ReloadIcon /></Refreshed>
              <Chevron w={13} />
            </SummaryCard>

            <HeadCard>
              <HeadTop>
                <Avatar $d={40} $bg="#bad89b" $fg="#294903">AW</Avatar>
                <NameBlock>
                  <NameLine>Adam Walker <small>- Saved</small></NameLine>
                  <FormLine>Client Group<FormDot>·</FormDot><FormName>Information</FormName><Chevron w={8} /></FormLine>
                </NameBlock>
                <HeadFact $w={109}><div><strong>Adam Walker</strong>Name</div></HeadFact>
                <HeadFact $w={187} $line $blue>
                  <Avatar $d={32} $bg="#498205" $fg="#fff">WA</Avatar>
                  <div><strong>Wealthcraft Admin</strong>Advisor</div>
                </HeadFact>
                <HeadFact $w={76} $line $blue><div><strong>USD</strong>Currency</div></HeadFact>
                <HeadFact $w={73} $line><div><strong>$0.00</strong>AUM</div></HeadFact>
                <HeadChevron><Chevron w={16} /></HeadChevron>
              </HeadTop>
              <HeadBottom>
                <Tabs>
                  {tabs.map(([t, w], i) => <Tab key={t} $w={w} $active={i === 0}>{t}</Tab>)}
                  <Tab $w={80}><div>Related <Chevron w={12} /></div></Tab>
                </Tabs>
                <FormAssist><FormAssistIcon />Form assist</FormAssist>
              </HeadBottom>
            </HeadCard>

            <Columns>
              <Column $w={1006}>
                <Card $h={474}>
                  <CardTitle>Client Details</CardTitle>
                  <FieldGrid $rows={6}>
                    <Field label="Name" required value="Adam Walker" />
                    <Field label="Salutation" muted value="---" />
                    <Field label="Client Type" value="Prospect" end={<EndSlot $r={7}><Chevron w={13} /></EndSlot>} />
                    <Field label="Client Grade" muted value="---" end={lookup} pl={12} />
                    <Field label="Account Category" mark={<LockIcon />} value="No Account" />
                    <Field label="Currency" required pl={4} end={lookup}>
                      <Chip $w={84}><CoinsIcon /><u>USD</u><CloseIcon color="#225f9f" /></Chip>
                    </Field>
                    <Field label="Client Group Risk Profile" muted pl={12} value="Look for Client Group Risk Profile" end={lookup} />
                    <Field label="Knowledge and Experience" muted pl={12} value="Look for Knowledge and Experience" end={lookup} />
                    <Field label="Capacity for Loss" muted pl={12} value="---" end={lookup} />
                    <Field label="Next Review Date" muted value="dd/MM/yyyy" end={calendar} />
                    <Field label="Last Review Date" muted value="dd/MM/yyyy" end={calendar} />
                  </FieldGrid>
                </Card>
                <Card $h={200} $pt={14}>
                  <FieldGrid $rows={1}>
                    <Field label="Primary Contact" required pl={4}><Chip $w={138} /></Field>
                    <Field label="Secondary Contact" muted pl={12} />
                  </FieldGrid>
                </Card>
              </Column>

              <Column $w={670}>
                <Card $h={138} $pt={14} $pr={19}>
                  <Field label="AUM" mark={<CalcIcon />} value="$0.00" />
                  <div>Last updated:</div>
                  <div>10/08/2026 11:44</div>
                </Card>
                <Card $h={194} $pt={14} $pr={19}>
                  <Label>Personal Notes</Label>
                  <Input $muted $h={136}><Dashes>---</Dashes></Input>
                </Card>
                <Card $h={300}>
                  <TimelineHead>
                    Timeline
                    <TimelineTools>
                      <PlusIcon />
                      <Icon><path d="M4 .5h8a1 1 0 0 1 1 1v14l-5-4-5 4v-14a1 1 0 0 1 1-1z" strokeWidth="1.200" /></Icon>
                      <Icon><path d="M.5 1.500h15L9.500 9v6.500h-3V9z" /></Icon>
                      <Icon color="#242424"><path d="M0 1.500h16M6.500 5h9.500M6.500 8h9.500M6.500 11h9.500M6.500 14h9.500M2.500 4v10M.5 12l2 2 2-2" /></Icon>
                      <RefreshIcon />
                      <DotsIcon />
                    </TimelineTools>
                  </TimelineHead>
                  <TimelineSearch><SearchIcon color="#424242" size={17} />Search timeline</TimelineSearch>
                  <NoteRow><PencilIcon /><span>Enter a note...</span><ClipIcon /></NoteRow>
                  <HighlightsRow><CopilotIcon size={22} /><span>Highlights</span><Chevron w={16} up /></HighlightsRow>
                  <HighlightBox><InfoIcon size={16} /><span>There was no valid information to generate highlights</span></HighlightBox>
                </Card>
              </Column>
            </Columns>
          </Content>
          <PageThumb />
        </Main>
      </Body>
    </Page>
  );
}
